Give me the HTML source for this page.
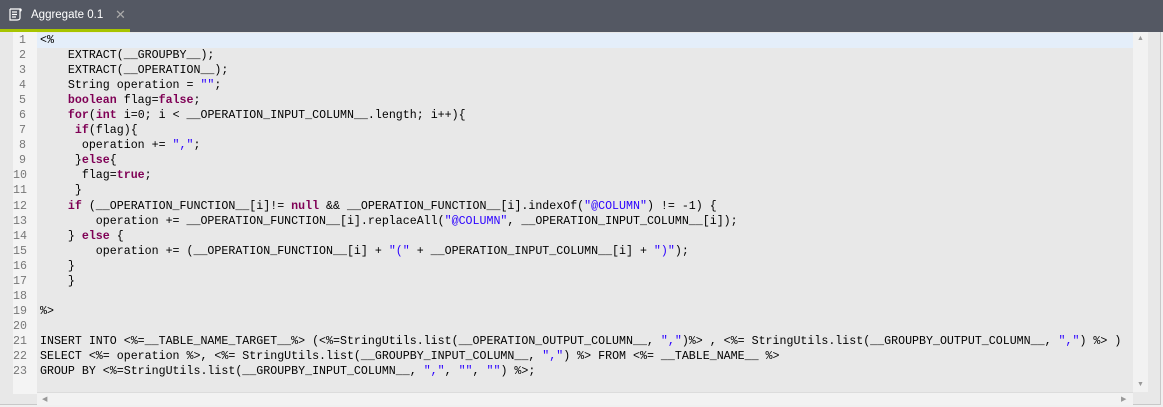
<!DOCTYPE html>
<html><head><style>
body{margin:0;width:1163px;height:407px;background:#f0f0f0;overflow:hidden;position:relative;font-family:"Liberation Sans",sans-serif}
.tabbar{position:absolute;left:0;top:0;width:1163px;height:32px;background:#545863}
.tab{position:absolute;left:0;top:0;width:130px;height:29px;border-bottom:3px solid #a7c400}
.tab .t{position:absolute;left:31px;top:9px;color:#fff;font-size:11.5px}
.tab .x{position:absolute;left:115px;top:7px;color:#aaa;font-size:13px}
.ed{position:absolute;left:0;top:32px;width:1160px;height:372px;background:#e8e8e8;border-right:1px solid #c8c8c8;border-bottom:1px solid #c8c8c8}
.gut{position:absolute;left:13px;top:0;width:24px;height:362px;background:#f4f4f4}
.hl{position:absolute;left:37px;top:1px;width:1096px;height:15px;background:#e4eefa}
pre{margin:0;position:absolute;top:1px;font-family:"Liberation Mono",monospace;font-size:11.63px;line-height:15.05px}
.ln{left:13px;width:13px;text-align:right;color:#787878}
.code{left:40px;color:#000}
b{color:#7f0055}
s{text-decoration:none;color:#2a00ff}
.vs{position:absolute;left:1133px;top:0;width:15px;height:360px;background:#f2f2f2}
.hs{position:absolute;left:37px;top:360px;width:1096px;height:12px;background:#f2f2f2;border-top:1px solid #dcdcdc}
.ar{position:absolute;color:#999;font-size:7px}
</style></head><body>
<div class="tabbar"><div class="tab">
<svg style="position:absolute;left:7px;top:7px" width="16" height="16" viewBox="0 0 16 16" fill="none" stroke="#fff" stroke-width="1.2"><path d="M3 2h10v9M3 2v11h7"/><path d="M13 2c1.5 0 1.5 2 0 2"/><path d="M5 5h5M5 7.5h5M5 10h4"/><path d="M10 13c2 0 3-1 3-2"/></svg>
<span class="t">Aggregate 0.1</span><span class="x">✕</span></div></div>
<div class="ed">
<div class="gut"></div><div class="hl"></div>
<pre class="ln">1
2
3
4
5
6
7
8
9
10
11
12
13
14
15
16
17
18
19
20
21
22
23</pre>
<pre class="code">&lt;%
    EXTRACT(__GROUPBY__);
    EXTRACT(__OPERATION__);
    String operation = <s>""</s>;
    <b>boolean</b> flag=<b>false</b>;
    <b>for</b>(<b>int</b> i=0; i &lt; __OPERATION_INPUT_COLUMN__.length; i++){
     <b>if</b>(flag){
      operation += <s>","</s>;
     }<b>else</b>{
      flag=<b>true</b>;
     }
    <b>if</b> (__OPERATION_FUNCTION__[i]!= <b>null</b> &amp;&amp; __OPERATION_FUNCTION__[i].indexOf(<s>"@COLUMN"</s>) != -1) {
        operation += __OPERATION_FUNCTION__[i].replaceAll(<s>"@COLUMN"</s>, __OPERATION_INPUT_COLUMN__[i]);
    } <b>else</b> {
        operation += (__OPERATION_FUNCTION__[i] + <s>"("</s> + __OPERATION_INPUT_COLUMN__[i] + <s>")"</s>);
    }
    }

%&gt;

INSERT INTO &lt;%=__TABLE_NAME_TARGET__%&gt; (&lt;%=StringUtils.list(__OPERATION_OUTPUT_COLUMN__, <s>","</s>)%&gt; , &lt;%= StringUtils.list(__GROUPBY_OUTPUT_COLUMN__, <s>","</s>) %&gt; )
SELECT &lt;%= operation %&gt;, &lt;%= StringUtils.list(__GROUPBY_INPUT_COLUMN__, <s>","</s>) %&gt; FROM &lt;%= __TABLE_NAME__ %&gt;
GROUP BY &lt;%=StringUtils.list(__GROUPBY_INPUT_COLUMN__, <s>","</s>, <s>""</s>, <s>""</s>) %&gt;;</pre>
<div class="vs"><span class="ar" style="left:4px;top:3px">▲</span><span class="ar" style="left:4px;top:349px">▼</span></div>
<div class="hs"><span class="ar" style="left:5px;top:2px">◀</span><span class="ar" style="left:1084px;top:2px">▶</span></div>
</div>
</body></html>
